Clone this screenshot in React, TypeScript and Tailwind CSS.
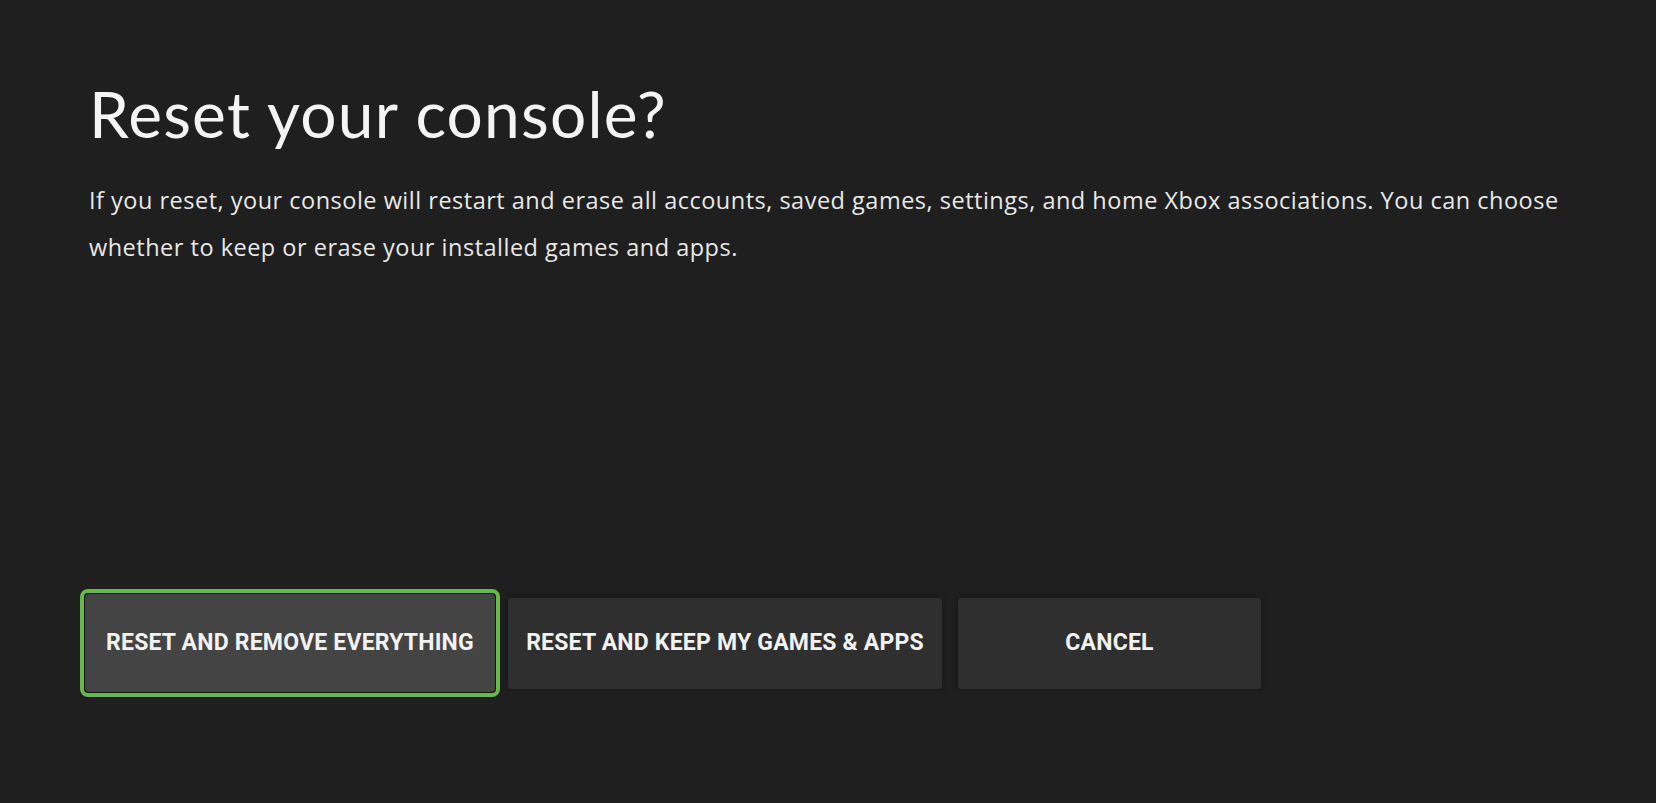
import React from "react";

const titleFont = { fontFamily: "Lato, 'Open Sans', sans-serif" };
const bodyFont = { fontFamily: "'Open Sans', Lato, sans-serif" };
const buttonFont = { fontFamily: "Roboto, 'Liberation Sans', sans-serif" };

function FocusedButton({ label }: { label: string }) {
  return (
    <div className="w-[420px] h-[108px] rounded-[8px] border-[4px] border-[#68ba48] bg-[#151515] p-[1px] shrink-0">
      <button
        className="w-full h-full rounded-[4px] bg-[#444444] text-[#f2f2f2] text-[23px] font-bold tracking-[0.2px] flex items-center justify-center"
        style={buttonFont}
      >
        {label}
      </button>
    </div>
  );
}

function Button({ label, width }: { label: string; width: string }) {
  return (
    <button
      className={`${width} h-[91px] rounded-[3px] bg-[#2f2f2f] shadow-[0_0_6px_rgba(0,0,0,0.35)] text-[#f2f2f2] text-[23px] font-bold tracking-[0.2px] flex items-center justify-center shrink-0`}
      style={buttonFont}
    >
      {label}
    </button>
  );
}

export default function App() {
  return (
    <div className="w-full h-[803px] bg-[#1f1f1f] text-white overflow-hidden">
      <div className="pl-[89px] pt-[82px]">
        {/* Header */}
        <h1
          className="text-[64px] leading-[64px] font-normal tracking-[1.2px] text-[#f4f4f4]"
          style={titleFont}
        >
          Reset your console?
        </h1>
        <p
          className="mt-[31px] text-[23.5px] leading-[47px] tracking-[0.5px] text-[#e8e8e8]"
          style={bodyFont}
        >
          If you reset, your console will restart and erase all accounts, saved games, settings, and home Xbox associations. You can choose
          <br />
          whether to keep or erase your installed games and apps.
        </p>
      </div>

      {/* Actions */}
      <div className="mt-[318px] pl-[80px] flex items-center">
        <FocusedButton label="RESET AND REMOVE EVERYTHING" />
        <div className="ml-[8px] flex gap-[16px]">
          <Button label="RESET AND KEEP MY GAMES & APPS" width="w-[434px]" />
          <Button label="CANCEL" width="w-[303px]" />
        </div>
      </div>
    </div>
  );
}
